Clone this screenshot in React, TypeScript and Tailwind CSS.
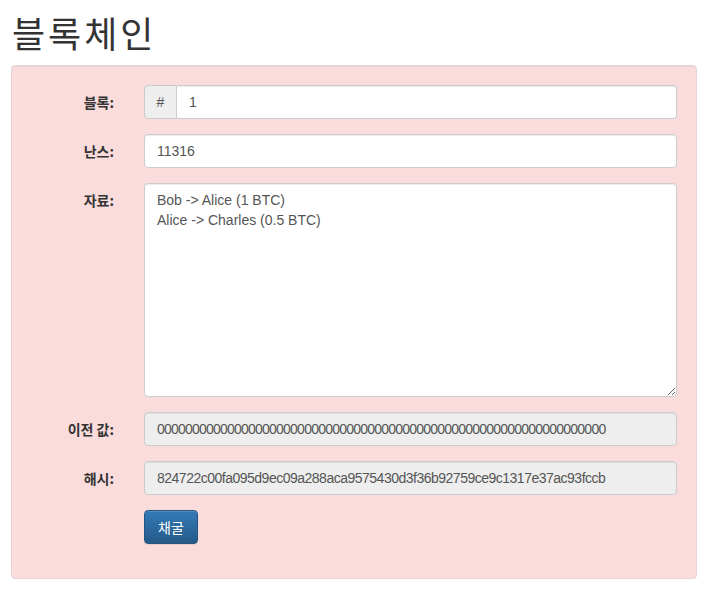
import React from "react";

const sans = "font-['Liberation_Sans','Noto_Sans_CJK_KR',sans-serif]";
const kr = "font-['Noto_Sans_CJK_KR','Liberation_Sans',sans-serif]";

function Label({ children }: { children: React.ReactNode }) {
  return (
    <div className={`w-[83px] h-[34px] flex items-center justify-end shrink-0 text-[14px] font-bold text-[#333] ${kr}`}>
      {children}
    </div>
  );
}

export default function App() {
  const inputBase =
    "h-[34px] border border-[#ccc] rounded-[4px] px-[12px] text-[14px] text-[#555] shadow-[inset_0_1px_1px_rgba(0,0,0,0.075)] flex items-center";
  return (
    <div className={`bg-white min-h-[594px] w-[712px] px-[11px] ${sans}`}>
      <h1 className={`pt-[12px] mb-[13px] pl-[1px] text-[36px] leading-[40px] font-normal tracking-[3px] text-[#333] ${kr}`}>
        블록체인
      </h1>
      <div className="w-[686px] bg-[#fadcdc] border border-[#e6d5d5] rounded-[4px] p-[19px] pb-[19px] shadow-[inset_0_1px_1px_rgba(0,0,0,0.05)]">
        <div className="flex flex-col gap-[15px]">
          <div className="flex gap-[30px]">
            <Label>블록:</Label>
            <div className="flex flex-1">
              <div className="w-[33px] h-[34px] bg-[#eee] border border-[#ccc] rounded-l-[4px] flex items-center justify-center text-[14px] text-[#555]">
                #
              </div>
              <div className={`${inputBase} flex-1 bg-white border-l-0 rounded-l-none`}>1</div>
            </div>
          </div>
          <div className="flex gap-[30px]">
            <Label>난스:</Label>
            <div className={`${inputBase} flex-1 bg-white`}>11316</div>
          </div>
          <div className="flex gap-[30px]">
            <Label>자료:</Label>
            <textarea
              className="flex-1 h-[214px] bg-white border border-[#ccc] rounded-[4px] px-[12px] py-[6px] text-[14px] leading-[20px] text-[#555] shadow-[inset_0_1px_1px_rgba(0,0,0,0.075)] outline-none"
              defaultValue={"Bob -> Alice (1 BTC)\nAlice -> Charles (0.5 BTC)"}
            />
          </div>
          <div className="flex gap-[30px]">
            <Label>이전 값:</Label>
            <div className={`${inputBase} flex-1 bg-[#eee] tracking-[-0.78px]`}>
              {"0".repeat(64)}
            </div>
          </div>
          <div className="flex gap-[30px]">
            <Label>해시:</Label>
            <div className={`${inputBase} flex-1 bg-[#eee] tracking-[-0.5px]`}>
              824722c00fa095d9ec09a288aca9575430d3f36b92759ce9c1317e37ac93fccb
            </div>
          </div>
          <div className="flex gap-[30px] mb-[15px]">
            <div className="w-[83px] shrink-0" />
            <button
              className={`w-[54px] h-[34px] rounded-[4px] border border-[#245580] bg-gradient-to-b from-[#337ab7] to-[#265a88] text-white text-[14px] shadow-[inset_0_1px_0_rgba(255,255,255,0.15),0_1px_1px_rgba(0,0,0,0.075)] ${kr}`}
            >
              채굴
            </button>
          </div>
        </div>
      </div>
    </div>
  );
}
